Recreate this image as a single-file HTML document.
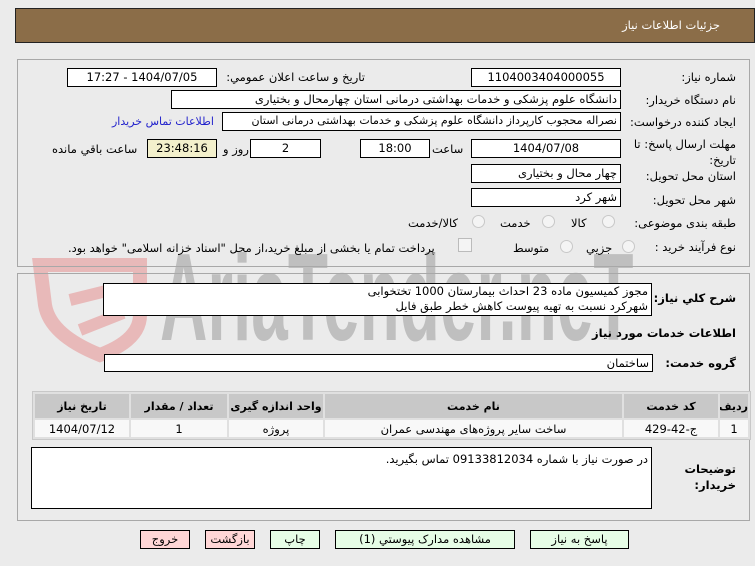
<!DOCTYPE html>
<html><head><meta charset="utf-8"><style>
body{margin:0;width:755px;height:566px;background:#ebebeb;font-family:Tahoma,"DejaVu Sans",sans-serif;font-size:11.5px;position:relative;overflow:hidden;color:#000}
.a{position:absolute}
.box{position:absolute;background:#fff;border:1px solid #000;box-sizing:border-box;direction:rtl;padding:0 3px;line-height:16px;white-space:nowrap;overflow:hidden}
.c{text-align:center}
.l{position:absolute;direction:rtl;white-space:nowrap}
.panel{position:absolute;border:1px solid #a8a8a8;box-sizing:border-box}
.rad{position:absolute;width:11px;height:11px;border-radius:50%;border:1px solid #c8c8c8;background:#f4f4f4}
.btn{position:absolute;border:1px solid #000;box-sizing:border-box;text-align:center;line-height:17px;background:#e6fde6;direction:rtl}
.pink{background:#ffd6d6}
table{position:absolute;border-collapse:separate;border-spacing:2px;background:#e0e0e0;border:1px solid #c8c8c8;table-layout:fixed}
td,th{text-align:center;direction:rtl;white-space:nowrap;overflow:hidden;padding:0}
th{background:#c8c8c8;font-weight:bold;height:24px;font-size:11px}
td{background:#f8f8f8;height:17px}
</style></head><body>
<div class="a" style="left:15px;top:8px;width:740px;height:35px;background:#8b6d48;border:1px solid #222;box-sizing:border-box"></div>
<div class="l" style="right:35px;top:18px;color:#fff">جزئيات اطلاعات نياز</div>

<!-- watermark -->
<svg class="a" style="left:0;top:255px" width="160" height="110"><path d="M40 10 L140 10 L140 60 Q140 85 100 100 Q50 80 45 50 Z" fill="none" stroke="#e8b9b9" stroke-width="14"/><path d="M70 45 L110 35 L118 60 L80 75" fill="none" stroke="#e8b9b9" stroke-width="12"/></svg>
<div class="a" style="left:160px;top:252px;width:500px;height:100px;overflow:hidden"><div style="font-family:'Liberation Sans Narrow','Liberation Sans',sans-serif;font-weight:bold;font-size:124px;color:#bfbfbf;transform:scaleX(0.53);transform-origin:left top;line-height:120px;white-space:nowrap;margin-top:-14px">AriaTender.neT</div></div>

<div class="panel" style="left:17px;top:59px;width:733px;height:208px"></div>
<div class="panel" style="left:17px;top:273px;width:733px;height:248px"></div>

<div class="l" style="right:19px;top:70px">شماره نياز:</div>
<div class="box c" style="left:471px;top:68px;width:150px;height:19px">1104003404000055</div>
<div class="l" style="right:390px;top:70px">تاريخ و ساعت اعلان عمومي:</div>
<div class="box c" style="left:67px;top:68px;width:150px;height:19px">1404/07/05 - 17:27</div>

<div class="l" style="right:19px;top:93px">نام دستگاه خريدار:</div>
<div class="box" style="left:171px;top:90px;width:450px;height:19px">دانشگاه علوم پزشکی و خدمات بهداشتی درمانی استان چهارمحال و بختیاری</div>

<div class="l" style="right:19px;top:115px">ايجاد کننده درخواست:</div>
<div class="box" style="left:222px;top:112px;width:399px;height:19px;font-size:11px">نصراله محجوب کارپرداز دانشگاه علوم پزشکی و خدمات بهداشتی درمانی استان</div>
<div class="l" style="left:112px;top:115px;color:#2222cc;font-size:11px">اطلاعات تماس خريدار</div>

<div class="l" style="right:19px;top:137px">مهلت ارسال پاسخ: تا</div>
<div class="l" style="right:19px;top:153px">تاريخ:</div>
<div class="box c" style="left:471px;top:139px;width:150px;height:19px">1404/07/08</div>
<div class="l" style="left:432px;top:142px">ساعت</div>
<div class="box c" style="left:360px;top:139px;width:70px;height:19px">18:00</div>
<div class="box c" style="left:250px;top:139px;width:71px;height:19px">2</div>
<div class="l" style="left:223px;top:142px">روز و</div>
<div class="box c" style="left:147px;top:139px;width:70px;height:19px;background:#f3f0cc">23:48:16</div>
<div class="l" style="left:52px;top:142px">ساعت باقي مانده</div>

<div class="l" style="right:19px;top:169px">استان محل تحويل:</div>
<div class="box" style="left:471px;top:164px;width:150px;height:19px">چهار محال و بختیاری</div>
<div class="l" style="right:19px;top:193px">شهر محل تحويل:</div>
<div class="box" style="left:471px;top:188px;width:150px;height:19px">شهر کرد</div>

<div class="l" style="right:19px;top:216px">طبقه بندی موضوعی:</div>
<div class="rad" style="left:602px;top:215px"></div><div class="l" style="left:571px;top:216px">کالا</div>
<div class="rad" style="left:542px;top:215px"></div><div class="l" style="left:500px;top:216px">خدمت</div>
<div class="rad" style="left:472px;top:215px"></div><div class="l" style="left:408px;top:216px">کالا/خدمت</div>

<div class="l" style="right:19px;top:240px">نوع فرآيند خريد :</div>
<div class="rad" style="left:622px;top:240px"></div><div class="l" style="left:586px;top:241px">جزيي</div>
<div class="rad" style="left:560px;top:240px"></div><div class="l" style="left:513px;top:241px">متوسط</div>
<div class="a" style="left:458px;top:238px;width:12px;height:12px;border:1px solid #bbb;background:#f4f4f4"></div>
<div class="l" style="left:68px;top:241px">پرداخت تمام يا بخشی از مبلغ خريد،از محل "اسناد خزانه اسلامی" خواهد بود.</div>

<div class="l" style="right:19px;top:291px;font-weight:bold">شرح کلي نياز:</div>
<div class="box" style="left:103px;top:283px;width:549px;height:33px;line-height:15px;background:#fff">مجوز کمیسیون ماده 23 احداث بیمارستان 1000 تختخوابی<br>شهرکرد نسبت به تهیه پیوست کاهش خطر طبق فایل</div>
<div class="l" style="right:19px;top:326px;font-weight:bold">اطلاعات خدمات مورد نياز</div>
<div class="l" style="right:19px;top:356px;font-weight:bold">گروه خدمت:</div>
<div class="box" style="left:104px;top:354px;width:549px;height:18px">ساختمان</div>

<table style="left:32px;top:391px;width:719px">
<tr><th style="width:94px">تاريخ نياز</th><th style="width:96px">تعداد / مقدار</th><th style="width:94px">واحد اندازه گيری</th><th>نام خدمت</th><th style="width:94px">کد خدمت</th><th style="width:28px">رديف</th></tr>
<tr><td>1404/07/12</td><td>1</td><td>پروژه</td><td>ساخت سایر پروژه‌های مهندسی عمران</td><td>ج-42-429</td><td>1</td></tr>
</table>

<div class="box" style="left:31px;top:447px;width:621px;height:62px;padding-top:3px">در صورت نیاز با شماره 09133812034 تماس بگیرید.</div>
<div class="l" style="right:19px;top:462px;font-weight:bold">توضيحات</div>
<div class="l" style="right:19px;top:478px;font-weight:bold">خريدار:</div>

<div class="btn" style="left:530px;top:530px;width:99px;height:19px">پاسخ به نياز</div>
<div class="btn" style="left:335px;top:530px;width:180px;height:19px">مشاهده مدارک پيوستي (1)</div>
<div class="btn" style="left:270px;top:530px;width:50px;height:19px">چاپ</div>
<div class="btn pink" style="left:205px;top:530px;width:50px;height:19px">بازگشت</div>
<div class="btn pink" style="left:140px;top:530px;width:50px;height:19px">خروج</div>
</body></html>
